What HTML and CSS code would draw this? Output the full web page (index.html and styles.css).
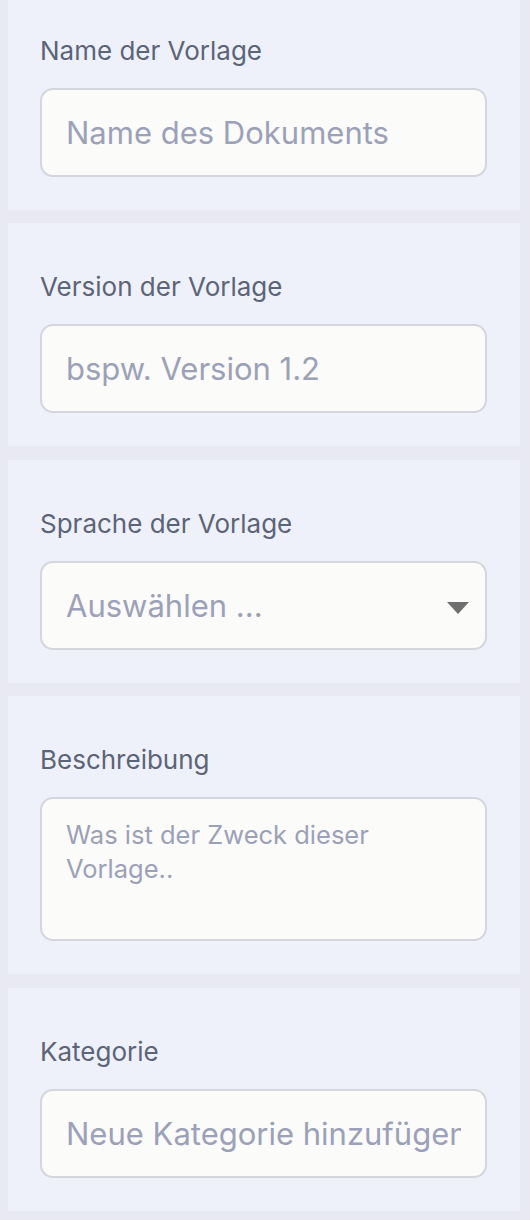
FILE: index.html
```html
<!DOCTYPE html>
<html lang="de">
<head>
<meta charset="utf-8">
<link rel="stylesheet" href="styles.css">
</head>
<body>
<div class="form">
  <section class="card">
    <label class="label">Name der Vorlage</label>
    <div class="field"><span class="ph">Name des Dokuments</span></div>
  </section>
  <section class="card">
    <label class="label">Version der Vorlage</label>
    <div class="field"><span class="ph">bspw. Version 1.2</span></div>
  </section>
  <section class="card">
    <label class="label">Sprache der Vorlage</label>
    <div class="field select"><span class="ph">Auswählen ...</span><span class="caret"></span></div>
  </section>
  <section class="card">
    <label class="label">Beschreibung</label>
    <div class="field area"><span class="ph small">Was ist der Zweck dieser Vorlage..</span></div>
  </section>
  <section class="card">
    <label class="label">Kategorie</label>
    <div class="field"><span class="ph">Neue Kategorie hinzufügen</span></div>
  </section>
</div>
</body>
</html>
```
FILE: styles.css
```css
html, body {
  margin: 0;
  padding: 0;
  background: #e9e9f3;
}
body {
  font-family: Inter, "Noto Sans", sans-serif;
  width: 530px;
  height: 1220px;
  overflow: hidden;
}
.form {
  display: flex;
  flex-direction: column;
  gap: 13.5px;
  padding: 0 10px 0 8px;
  margin-top: -13.5px;
}
.card {
  background: #eef1fa;
  padding: 48px 33px 33px 32px;
  display: flex;
  flex-direction: column;
  gap: 21px;
}
.label {
  font-size: 26px;
  line-height: 32px;
  color: #5c6477;
}
.field {
  box-sizing: border-box;
  height: 89px;
  background: #fbfbf9;
  border: 2px solid #d3d6dc;
  border-radius: 13px;
  padding: 0 24px 0 24px;
  display: flex;
  align-items: center;
  overflow: hidden;
}
.ph {
  flex: 1;
  min-width: 0;
  overflow: hidden;
  font-size: 31px;
  color: #9ba1b8;
  white-space: nowrap;
}
.select {
  justify-content: space-between;
}
.caret {
  flex: none;
  width: 0;
  height: 0;
  border-left: 11px solid transparent;
  border-right: 11px solid transparent;
  border-top: 12px solid #6f6f6f;
  margin-top: 6px;
  margin-right: -8px;
}
.area {
  height: 144px;
  align-items: flex-start;
  padding-top: 19px;
}
.ph.small {
  flex: none;
  font-size: 25.5px;
  line-height: 34px;
  white-space: normal;
  width: 330px;
}
```
